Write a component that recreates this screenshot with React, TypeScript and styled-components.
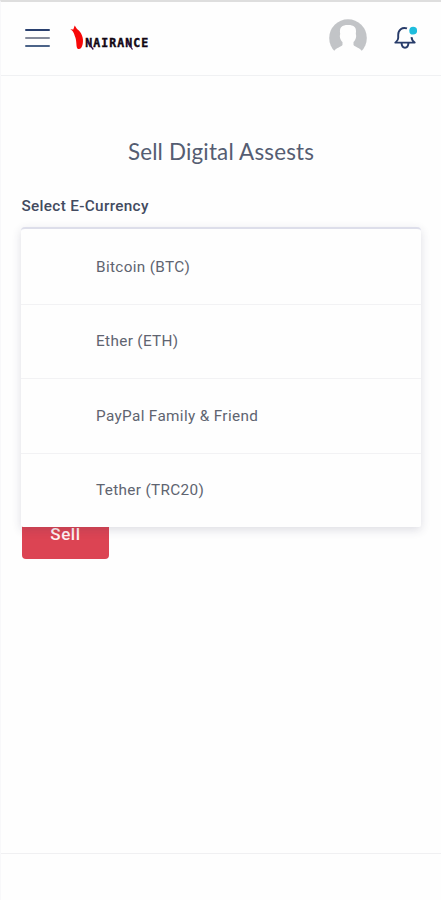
import React from "react";
import styled, { createGlobalStyle } from "styled-components";

const GlobalStyle = createGlobalStyle`
  * { box-sizing: border-box; }
  body { margin: 0; background: #fefefe; font-family: Roboto, sans-serif; }
`;

const Page = styled.div`
  display: flex;
  flex-direction: column;
  height: 900px;
  border-top: 2px solid #dedede;
  border-left: 1px solid #f8f8fa;
  overflow: hidden;
`;

const Header = styled.header`
  display: flex;
  align-items: center;
  height: 74px;
  padding: 0 24px 2px;
  border-bottom: 1px solid #f0f1f3;
`;

const MenuButton = styled.button`
  display: flex;
  flex-direction: column;
  justify-content: space-between;
  width: 25px;
  height: 18px;
  padding: 0;
  border: 0;
  background: none;
`;

const MenuLine = styled.span<{ $color: string }>`
  height: 2px;
  border-radius: 1px;
  background: ${(p) => p.$color};
`;

const Logo = styled.svg`
  margin-left: 20px;
  flex: none;
`;

const HeaderActions = styled.div`
  display: flex;
  align-items: center;
  gap: 26px;
  margin-left: auto;
`;

const Main = styled.main`
  flex: 1;
  padding: 60px 20px 0;
`;

const Title = styled.h1`
  margin: 0;
  text-align: center;
  font: 400 22.4px/32px Lato, sans-serif;
  letter-spacing: 0.18px;
  color: #555d72;
`;

const Label = styled.label`
  display: block;
  margin-top: 27px;
  margin-left: 0.5px;
  font-size: 15.3px;
  font-weight: 500;
  line-height: 23px;
  letter-spacing: 0.33px;
  color: #434b60;
`;

const SelectField = styled.div`
  position: relative;
  height: 296px;
  margin-top: 9px;
`;

const Options = styled.ul`
  position: absolute;
  z-index: 1;
  inset: 0 0 auto;
  margin: 0;
  padding: 0;
  list-style: none;
  background: #fefefe;
  border-top: 2px solid #dddeea;
  border-radius: 4px 4px 2px 2px;
  box-shadow: 0 3px 10px rgba(50, 50, 90, 0.16);
`;

const Option = styled.li`
  display: flex;
  align-items: center;
  height: 74.6px;
  padding-left: 75px;
  font-size: 15.3px;
  letter-spacing: 0.35px;
  color: #5f6470;

  & + & {
    border-top: 1px solid #f2f2f4;
  }

  &:first-child {
    padding-top: 1px;
  }

  &:last-child {
    padding-bottom: 2px;
  }
`;

const SellButton = styled.button`
  display: block;
  width: 87px;
  height: 50px;
  margin: -14px 0 0 1px;
  padding: 0;
  border: 0;
  border-radius: 4px;
  background: #dc4453;
  color: #fff0f2;
  font: 500 17px/50px Roboto, sans-serif;
  letter-spacing: 0.6px;
`;

const Footer = styled.footer`
  height: 47px;
  border-top: 1px solid #f0f0f2;
`;

const currencies = ["Bitcoin (BTC)", "Ether (ETH)", "PayPal Family & Friend", "Tether (TRC20)"];

function NairanceLogo() {
  return (
    <Logo width="80" height="28" viewBox="0 0 80 28" aria-label="Nairance">
      <path d="M0.3 5.2 L3.3 5.4 L4.7 1.5 L7 5 C11.5 8 14 14 12.7 20 C12 23.5 10.5 25.5 8 25 C5.5 23.5 7.3 17 4.8 12 C4 9 3.5 7.5 0.3 5.2Z" fill="#f70808" />
      <text x="15.3" y="23" textLength="63" lengthAdjust="spacing" fontFamily="DejaVu Sans Mono" fontWeight="700" fontSize="11.5" fill="#120713" stroke="#120713" strokeWidth="0.4">NAIRANCE</text>
      <path d="M17 17 L23.3 25.5 M56.5 17 L62.5 25.5" stroke="#351047" strokeWidth="1.3" fill="none" />
    </Logo>
  );
}

function Avatar() {
  return (
    <svg width="38" height="38" viewBox="0 0 38 38" aria-label="Profile">
      <defs>
        <clipPath id="avatar-circle"><circle cx="19" cy="19" r="18.8" /></clipPath>
      </defs>
      <g clipPath="url(#avatar-circle)">
        <path d="M0 0H38V32H0Z" fill="#c2c4c7" />
        <path d="M11.2 15C10 8 13 6 19 6S28 8 26.8 15C28 18 26 22 24.5 23V26C26 28 30 28.5 33 32V38H5V32C8 28.5 12 28 13.5 26V23C12 22 10 18 11.2 15Z" fill="#fefefe" />
      </g>
    </svg>
  );
}

function Bell() {
  return (
    <svg width="24" height="26" viewBox="0 0 24 26" fill="none" aria-label="Notifications">
      <path d="M14 3.4C9 1.7 5.2 5.2 5.2 9.7V13C5.2 15.5 3.5 16.5 2.3 17.6H21.7C20 16.5 18.8 15 18.5 12.2" stroke="#273b69" strokeWidth="1.9" strokeLinejoin="round" />
      <path d="M8.6 18C8.8 24.3 15.2 24.3 15.4 18" stroke="#273b69" strokeWidth="2" />
      <circle cx="20.2" cy="5.7" r="3.9" fill="#1fbddd" />
    </svg>
  );
}

export default function App() {
  return (
    <>
      <GlobalStyle />
      <Page>
        <Header>
          <MenuButton aria-label="Menu">
            <MenuLine $color="#29406f" />
            <MenuLine $color="#858b9b" />
            <MenuLine $color="#4b6388" />
          </MenuButton>
          <NairanceLogo />
          <HeaderActions>
            <Avatar />
            <Bell />
          </HeaderActions>
        </Header>
        <Main>
          <Title>Sell Digital Assests</Title>
          <Label>Select E-Currency</Label>
          <SelectField>
            <Options>
              {currencies.map((name) => <Option key={name}>{name}</Option>)}
            </Options>
          </SelectField>
          <SellButton>Sell</SellButton>
        </Main>
        <Footer />
      </Page>
    </>
  );
}
